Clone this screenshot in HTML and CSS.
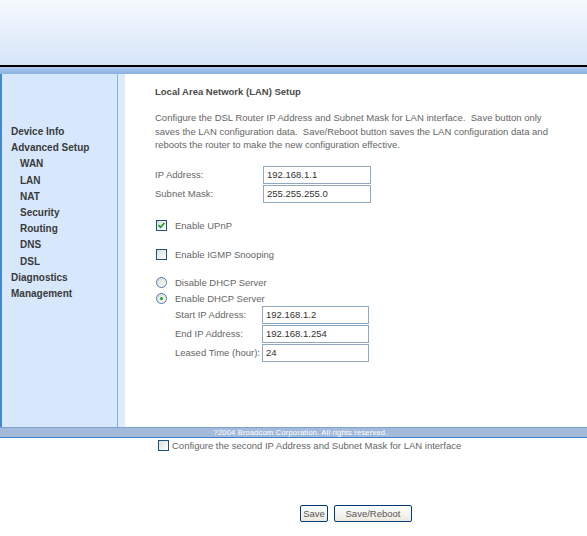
FILE: index.html
```html
<!DOCTYPE html>
<html>
<head>
<meta charset="utf-8">
<title>LAN Setup</title>
<link rel="stylesheet" href="styles.css">
</head>
<body>
<div class="header"></div>
<div class="bar"></div>
<div class="main">
  <nav class="side">
    <div class="item">Device Info</div>
    <div class="item">Advanced Setup</div>
    <div class="item sub">WAN</div>
    <div class="item sub">LAN</div>
    <div class="item sub">NAT</div>
    <div class="item sub">Security</div>
    <div class="item sub">Routing</div>
    <div class="item sub">DNS</div>
    <div class="item sub">DSL</div>
    <div class="item">Diagnostics</div>
    <div class="item">Management</div>
  </nav>
  <div class="strip"></div>
  <div class="content">
    <div class="title">Local Area Network (LAN) Setup</div>
    <p class="desc">Configure the DSL Router IP Address and Subnet Mask for LAN interface.&nbsp; Save button only<br>saves the LAN configuration data.&nbsp; Save/Reboot button saves the LAN configuration data and<br>reboots the router to make the new configuration effective.</p>
    <div class="form ip">
      <span class="lbl">IP Address:</span><span class="inp">192.168.1.1</span>
      <span class="lbl">Subnet Mask:</span><span class="inp">255.255.255.0</span>
    </div>
    <div class="check row-upnp"><span class="cb on"><svg viewBox="0 0 11 11" width="11" height="11"><path d="M2.5 5.2 L4.5 7.3 L8.5 3" fill="none" stroke="#21a121" stroke-width="1.8"/></svg></span><span>Enable UPnP</span></div>
    <div class="check row-igmp"><span class="cb"></span><span>Enable IGMP Snooping</span></div>
    <div class="check row-dis"><span class="rb"></span><span>Disable DHCP Server</span></div>
    <div class="check row-en"><span class="rb on"><span class="dot"></span></span><span>Enable DHCP Server</span></div>
    <div class="form dhcp">
      <span class="lbl">Start IP Address:</span><span class="inp">192.168.1.2</span>
      <span class="lbl">End IP Address:</span><span class="inp">192.168.1.254</span>
      <span class="lbl">Leased Time (hour):</span><span class="inp">24</span>
    </div>
  </div>
</div>
<div class="footer">?2004 Broadcom Corporation. All rights reserved.</div>
<div class="second"><span class="cb"></span><span>Configure the second IP Address and Subnet Mask for LAN interface</span></div>
<div class="buttons"><span class="btn save">Save</span><span class="btn reboot">Save/Reboot</span></div>
</body>
</html>
```
FILE: styles.css
```css
html, body {
  margin: 0;
  padding: 0;
  background: #ffffff;
  font-family: "Liberation Sans", Arial, sans-serif;
  font-size: 10px;
  color: #666666;
}
.header {
  height: 65px;
  background: linear-gradient(#f6f9fe, #d6e5f8);
  border-bottom: 2px solid #000000;
}
.bar {
  height: 7px;
  background: linear-gradient(#aecbee, #8ab0e2);
}
.main {
  display: flex;
  height: 353px;
}
.side {
  width: 115px;
  background: #d7e8fc;
  border-left: 2px solid #3f8ad8;
  border-right: 1px solid #80b2e8;
  padding-top: 50px;
  box-sizing: content-box;
}
.item {
  height: 16.2px;
  line-height: 16px;
  padding-left: 9px;
  font-weight: bold;
  color: #3a3a3a;
  font-size: 10px;
}
.item.sub { padding-left: 18px; }
.strip {
  width: 7px;
  background: #deebfa;
}
.content {
  flex: 1;
  padding: 11px 0 0 30px;
}
.title {
  line-height: 13px;
  font-weight: bold;
  color: #4a4a4a;
  font-size: 9.5px;
}
.desc {
  margin: 13px 0 0 0;
  line-height: 13.5px;
  font-size: 9.5px;
}
.form {
  display: grid;
  row-gap: 1px;
  align-items: center;
}
.form.ip {
  margin-top: 14px;
  grid-template-columns: 108px 108px;
}
.form.dhcp {
  margin-top: -1px;
  margin-left: 20px;
  grid-template-columns: 87px 107px;
}
.inp {
  height: 16px;
  border: 1px solid #8fa7bf;
  line-height: 16px;
  padding-left: 3px;
  color: #333333;
  font-size: 9.5px;
  box-sizing: content-box;
}
.lbl { font-size: 9.5px; }
.check {
  display: flex;
  align-items: center;
  height: 16px;
  font-size: 9.5px;
}
.check .cb, .check .rb { margin: 0 8px 0 1px; }
.row-upnp { margin-top: 15px; }
.row-igmp { margin-top: 13px; }
.row-dis { margin-top: 12px; }
.row-en { margin-top: 0; }
.cb {
  display: inline-block;
  width: 9px;
  height: 9px;
  border: 1px solid #1c5180;
  background: linear-gradient(135deg, #dcdcd7, #ffffff);
  position: relative;
  flex: none;
}
.cb svg { position: absolute; left: -1px; top: -1px; }
.rb {
  display: inline-block;
  width: 9px;
  height: 9px;
  border: 1px solid #4f7aa9;
  border-radius: 50%;
  background: linear-gradient(135deg, #dcdcd7, #ffffff);
  position: relative;
  flex: none;
}
.rb .dot {
  position: absolute;
  left: 3px;
  top: 3px;
  width: 3px;
  height: 3px;
  border-radius: 50%;
  background: #21a121;
}
.footer {
  height: 9px;
  background: #a4badb;
  border-top: 1px solid #7aa3d6;
  border-bottom: 1px solid #3f7ec9;
  color: #ffffff;
  font-size: 7.5px;
  line-height: 9px;
  text-align: center;
  padding-left: 14px;
  letter-spacing: 0.2px;
}
.second {
  display: flex;
  align-items: center;
  padding-left: 158px;
  margin-top: 1px;
  height: 12px;
  font-size: 9.5px;
}
.second .cb { margin-right: 3px; }
.buttons {
  display: flex;
  gap: 6px;
  padding-left: 300px;
  margin-top: 54px;
}
.btn {
  display: inline-block;
  height: 15px;
  line-height: 15px;
  border: 1px solid #003c74;
  border-radius: 2px;
  background: linear-gradient(#ffffff, #ece9e0);
  text-align: center;
  font-size: 9.5px;
  color: #555555;
  box-sizing: content-box;
}
.btn.save { width: 26px; }
.btn.reboot { width: 76px; }
```
